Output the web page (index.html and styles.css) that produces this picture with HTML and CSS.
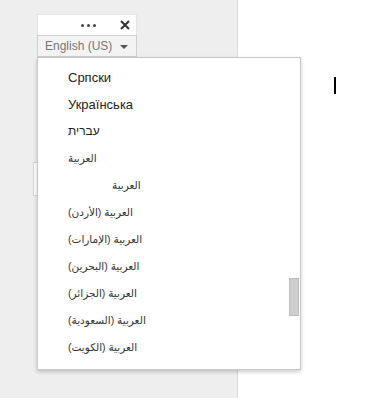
FILE: index.html
```html
<!DOCTYPE html>
<html lang="en">
<head>
    <meta charset="UTF-8">
    <title>Language picker</title>
    <link rel="stylesheet" href="styles.css">
</head>
<body>
    <div class="page">
        <aside class="side">
            <div class="toolbar">
                <div class="toolbar-top">
                    <span class="dots"><i></i><i></i><i></i></span>
                    <svg class="close" width="10" height="10" viewBox="0 0 10 10">
                        <path d="M1 1L9 9M9 1L1 9" stroke="#333" stroke-width="2"/>
                    </svg>
                </div>
                <div class="lang-btn">
                    <span>English (US)</span>
                    <span class="caret"></span>
                </div>
            </div>
            <div class="field-stub"></div>
        </aside>
        <main class="editor">
            <span class="cursor"></span>
        </main>
    </div>

    <div class="menu">
        <ul>
            <li>Српски</li>
            <li>Українська</li>
            <li class="he">עברית</li>
            <li class="ar">العربية</li>
            <li class="ar indent">العربية</li>
            <li class="ar">العربية (الأردن)</li>
            <li class="ar">العربية (الإمارات)</li>
            <li class="ar">العربية (البحرين)</li>
            <li class="ar">العربية (الجزائر)</li>
            <li class="ar">العربية (السعودية)</li>
            <li class="ar">العربية (الكويت)</li>
            <li class="ar">العربية (المغرب)</li>
        </ul>
        <div class="scroll-thumb"></div>
    </div>
</body>
</html>
```

FILE: styles.css
```css
* {
    margin: 0;
    padding: 0;
    box-sizing: border-box;
}

body {
    font-family: "Liberation Sans", Arial, "DejaVu Sans", sans-serif;
    background: #fff;
    color: #333;
}

.page {
    display: flex;
    height: 398px;
}

.side {
    width: 238px;
    background: #eeeeee;
    border-right: 1px solid #dcdcdc;
    padding: 14px 0 0 37px;
}

.toolbar {
    width: 100px;
}

.toolbar-top {
    height: 21px;
    background: #fff;
    border: 1px solid #e4e4e4;
    border-bottom: none;
    display: flex;
    align-items: center;
    justify-content: flex-end;
    gap: 24px;
    padding-right: 6px;
}

.dots {
    display: flex;
    gap: 3px;
    margin-top: 1px;
}

.dots i {
    width: 3px;
    height: 3px;
    border-radius: 50%;
    background: #444;
}

.close {
    display: block;
}

.lang-btn {
    height: 22px;
    background: #f3f3f3;
    border: 1px solid #cfcfcf;
    display: flex;
    align-items: center;
    padding-left: 7px;
    gap: 8px;
    font-size: 12px;
    color: #777;
}

.caret {
    width: 0;
    height: 0;
    border-left: 4px solid transparent;
    border-right: 4px solid transparent;
    border-top: 4px solid #555;
    margin-top: 1px;
}

.field-stub {
    width: 10px;
    height: 34px;
    margin: 105px 0 0 -4px;
    background: #fff;
    border: 1px solid #d4d4d4;
}

.editor {
    flex: 1;
    padding: 77px 0 0 96px;
}

.cursor {
    display: block;
    width: 2px;
    height: 17px;
    background: #000;
}

.menu {
    position: absolute;
    left: 37px;
    top: 57px;
    width: 264px;
    height: 313px;
    background: #fff;
    border: 1px solid #c8c8c8;
    box-shadow: 0 2px 4px rgba(0, 0, 0, 0.2);
    overflow: hidden;
}

.menu ul {
    list-style: none;
    padding-top: 6px;
}

.menu li {
    height: 27px;
    line-height: 27px;
    padding-left: 30px;
    font-size: 13px;
    color: #222;
    white-space: nowrap;
}

.menu li.he {
    font-size: 12px;
}

.menu li.ar {
    font-size: 10.5px;
    color: #333;
}

.menu li.indent {
    padding-left: 74px;
}

.scroll-thumb {
    position: absolute;
    right: 1px;
    top: 220px;
    width: 10px;
    height: 38px;
    background: #cdcdcd;
    border: 1px solid #bdbdbd;
}
```
